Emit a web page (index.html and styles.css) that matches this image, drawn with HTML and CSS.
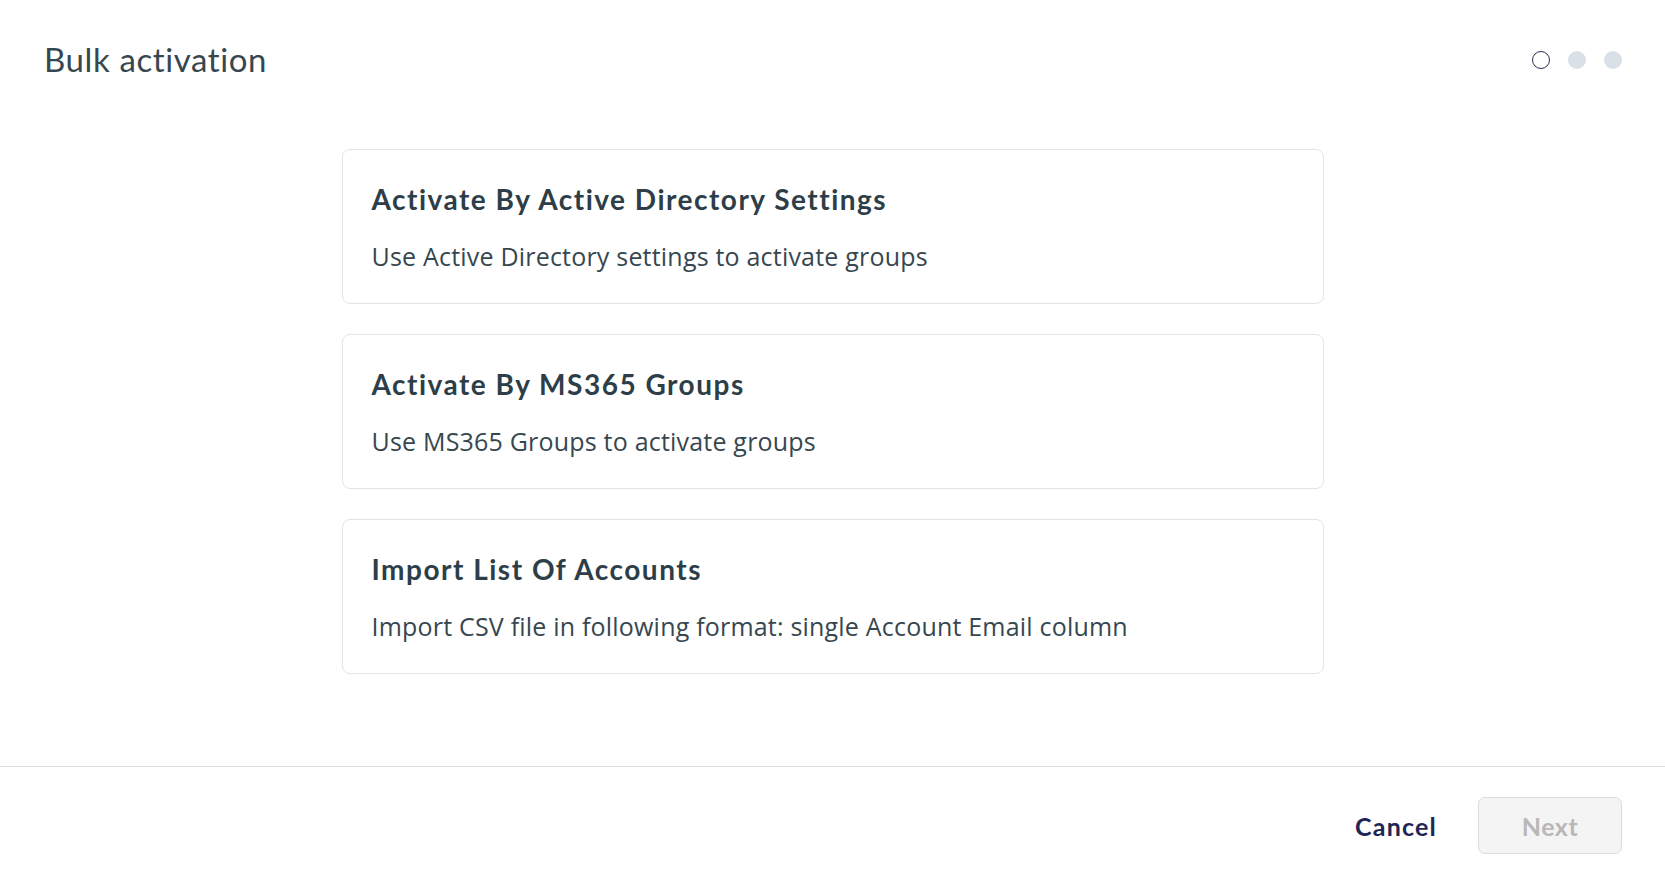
FILE: index.html
```html
<!DOCTYPE html>
<html lang="en">
<head>
  <meta charset="UTF-8">
  <title>Bulk activation</title>
  <link rel="stylesheet" href="styles.css">
</head>
<body>
  <div class="dialog">
    <div class="dialog-header">
      <h1>Bulk activation</h1>
      <div class="steps">
        <span class="step current"></span>
        <span class="step"></span>
        <span class="step"></span>
      </div>
    </div>

    <div class="dialog-body">
      <div class="option-card">
        <h3>Activate By Active Directory Settings</h3>
        <p>Use Active Directory settings to activate groups</p>
      </div>
      <div class="option-card">
        <h3>Activate By MS365 Groups</h3>
        <p>Use MS365 Groups to activate groups</p>
      </div>
      <div class="option-card">
        <h3>Import List Of Accounts</h3>
        <p>Import CSV file in following format: single Account Email column</p>
      </div>
    </div>

    <div class="dialog-footer">
      <button type="button" class="cancel-btn">Cancel</button>
      <button type="button" class="next-btn" disabled>Next</button>
    </div>
  </div>
</body>
</html>
```

FILE: styles.css
```css
body {
  margin: 0;
  font-family: "Open Sans", sans-serif;
  background-color: white;
  color: #37474f;
}
.dialog {
  display: flex;
  flex-direction: column;
  height: 100vh;
}
.dialog-header {
  height: 120px;
  display: flex;
  align-items: center;
  justify-content: space-between;
  padding: 0 43px 0 44px;
}
h1 {
  font-family: Lato, sans-serif;
  font-weight: 400;
  font-size: 33px;
  letter-spacing: 0.6px;
  margin: 0 0 2px;
  color: #37474f;
}
.steps {
  display: flex;
  gap: 18px;
}
.step {
  width: 18px;
  height: 18px;
  border-radius: 50%;
  background-color: #d9e0e7;
  box-sizing: border-box;
}
.step.current {
  background-color: white;
  border: 1.5px solid #2b2f55;
}
.dialog-body {
  flex: 1;
  display: flex;
  flex-direction: column;
  align-items: center;
  gap: 30px;
  padding-top: 29px;
}
.option-card {
  width: 982px;
  height: 155px;
  box-sizing: border-box;
  border: 1px solid #e1e5ea;
  border-radius: 8px;
  padding: 31px 29px 0;
  cursor: pointer;
}
.option-card h3 {
  font-family: Lato, sans-serif;
  font-weight: 700;
  font-size: 28px;
  letter-spacing: 1.5px;
  margin: 0;
  color: #2d3e48;
  line-height: 36px;
}
.option-card p {
  font-size: 25px;
  letter-spacing: 0.2px;
  margin: 23px 0 0;
  line-height: 32px;
  color: #37474f;
}
.dialog-footer {
  height: 117px;
  border-top: 1px solid #e0e0e0;
  display: flex;
  align-items: center;
  justify-content: flex-end;
  padding-right: 43px;
  gap: 41px;
}
button {
  font-family: Lato, sans-serif;
  font-weight: 700;
  font-size: 25px;
  border: none;
  border-radius: 7px;
  cursor: pointer;
  background: none;
}
.cancel-btn {
  color: #1f2656;
  padding: 0;
  letter-spacing: 1.2px;
}
.next-btn {
  width: 144px;
  height: 57px;
  background-color: #f4f4f4;
  border: 1px solid #dcdcdc;
  color: #b8b8b8;
  letter-spacing: 0.5px;
  cursor: default;
}
```
